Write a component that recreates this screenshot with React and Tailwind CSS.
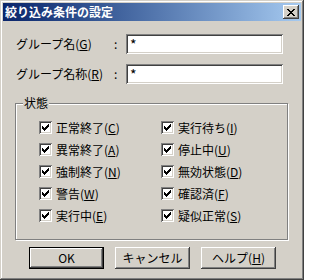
import React from "react";

const FONT = { fontFamily: '"Noto Sans CJK JP", "Noto Sans", sans-serif' };

const CHECK = ["......X", ".....XX", "X...XXX", "XX.XXX.", "XXXXX..", ".XXX...", "..X...."];
const CLOSE = ["XX....XX", ".XX..XX.", "..XXXX..", "...XX...", "..XXXX..", ".XX..XX.", "XX....XX"];

function Pixels({ rows, className }) {
  const w = rows[0].length;
  const h = rows.length;
  const rects = [];
  rows.forEach((r, y) =>
    r.split("").forEach((c, x) => {
      if (c === "X") rects.push(<rect key={x + "-" + y} x={x} y={y} width="1" height="1" />);
    })
  );
  return (
    <svg width={w} height={h} viewBox={`0 0 ${w} ${h}`} shapeRendering="crispEdges" className={className} fill="#000">
      {rects}
    </svg>
  );
}

function CheckBox({ label, acc }) {
  return (
    <div className="flex items-center h-[13px]">
      <div className="w-[13px] h-[13px] bg-white flex items-center justify-center shadow-[inset_1px_1px_0_#808080,inset_-1px_-1px_0_#ffffff,inset_2px_2px_0_#404040,inset_-2px_-2px_0_#d4d0c8]">
        <Pixels rows={CHECK} />
      </div>
      <span className="ml-[4px] text-[12px] leading-[13px] text-black whitespace-nowrap">
        {label}(<u>{acc}</u>)
      </span>
    </div>
  );
}

function Button({ children, def }) {
  return (
    <div
      className={
        "w-[75px] h-[22px] flex items-center justify-center text-[12px] text-black bg-[#d4d0c8] " +
        (def ? "border border-black " : "")
      }
    >
      <div className="w-full h-full flex items-center justify-center shadow-[inset_-1px_-1px_0_#404040,inset_1px_1px_0_#ffffff,inset_-2px_-2px_0_#808080]">
        {children}
      </div>
    </div>
  );
}

export default function App() {
  const left = [
    ["正常終了", "C"],
    ["異常終了", "A"],
    ["強制終了", "N"],
    ["警告", "W"],
    ["実行中", "E"],
  ];
  const right = [
    ["実行待ち", "I"],
    ["停止中", "U"],
    ["無効状態", "D"],
    ["確認済", "F"],
    ["疑似正常", "S"],
  ];
  const items = [];
  for (let i = 0; i < 5; i++) {
    items.push(<CheckBox key={"l" + i} label={left[i][0]} acc={left[i][1]} />);
    items.push(<CheckBox key={"r" + i} label={right[i][0]} acc={right[i][1]} />);
  }
  return (
    <div
      style={FONT}
      className="w-[304px] h-[280px] bg-[#d4d0c8] p-[3px] flex flex-col shadow-[inset_-1px_-1px_0_#404040,inset_1px_1px_0_#d4d0c8,inset_-2px_-2px_0_#808080,inset_2px_2px_0_#ffffff]"
    >
      <div className="h-[18px] flex items-center justify-between pl-[2px] pr-[2px] bg-gradient-to-r from-[#0a246a] to-[#a6caf0]">
        <span className="text-white font-bold text-[12px] leading-[18px]">絞り込み条件の設定</span>
        <div className="w-[16px] h-[14px] bg-[#d4d0c8] flex items-center justify-center shadow-[inset_-1px_-1px_0_#404040,inset_1px_1px_0_#ffffff,inset_-2px_-2px_0_#808080]">
          <Pixels rows={CLOSE} className="ml-[-1px]" />
        </div>
      </div>

      <div className="flex flex-col px-[12px]">
        <div className="mt-[13px] flex items-center pl-[1px] text-[12px] text-black">
          <span className="w-[98px] whitespace-nowrap">
            グループ名(<u>G</u>)
          </span>
          <span className="w-[12px]">:</span>
          <div className="w-[157px] h-[20px] bg-white flex items-center pl-[4px] text-[14px] shadow-[inset_1px_1px_0_#808080,inset_-1px_-1px_0_#ffffff,inset_2px_2px_0_#404040,inset_-2px_-2px_0_#d4d0c8]">
            *
          </div>
        </div>
        <div className="mt-[10px] flex items-center pl-[1px] text-[12px] text-black">
          <span className="w-[98px] whitespace-nowrap">
            グループ名称(<u>R</u>)
          </span>
          <span className="w-[12px]">:</span>
          <div className="w-[157px] h-[20px] bg-white flex items-center pl-[4px] text-[14px] shadow-[inset_1px_1px_0_#808080,inset_-1px_-1px_0_#ffffff,inset_2px_2px_0_#404040,inset_-2px_-2px_0_#d4d0c8]">
            *
          </div>
        </div>

        <div className="relative mt-[19px] w-[273px] h-[137px] border border-[#808080] shadow-[1px_1px_0_#ffffff,inset_1px_1px_0_#ffffff]">
          <span className="absolute left-[7px] -top-[9px] px-[1px] bg-[#d4d0c8] text-[12px] leading-[16px] text-black">
            状態
          </span>
          <div className="grid grid-cols-[122px_1fr] gap-y-[9px] pl-[23px] pt-[17px]">{items}</div>
        </div>

        <div className="mt-[7px] ml-[14px] flex gap-[11px]">
          <Button def>OK</Button>
          <Button>キャンセル</Button>
          <Button>
            ヘルプ(<u>H</u>)
          </Button>
        </div>
      </div>
    </div>
  );
}
